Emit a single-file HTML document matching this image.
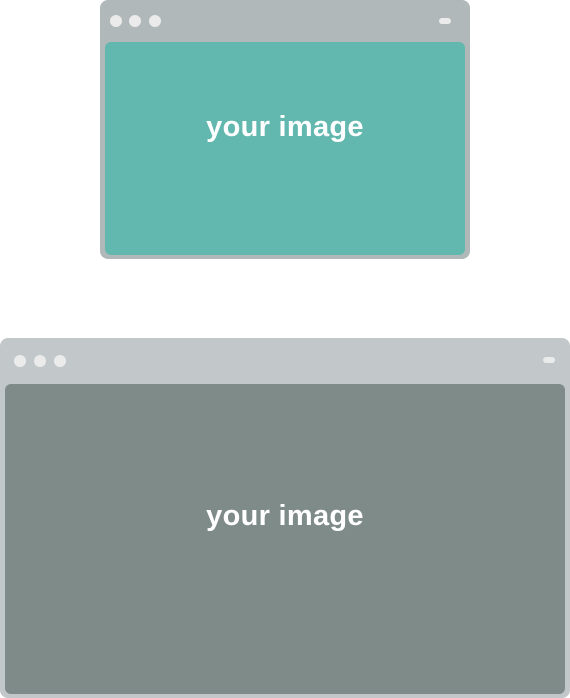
<!DOCTYPE html>
<html><head><meta charset="utf-8"><style>
html,body{margin:0;padding:0;width:570px;height:698px;background:#fff;overflow:hidden;font-family:"Liberation Sans",sans-serif}
.win{position:absolute;border-radius:8px}
.dot{position:absolute;width:12px;height:12px;border-radius:50%;background:#ebebeb}
.dash{position:absolute;width:12px;height:6px;border-radius:3px;background:#ebebeb}
.inner{position:absolute;border-radius:6px;color:#fff;font-size:29px;font-weight:bold;display:flex;align-items:center;justify-content:center;letter-spacing:0.3px}
</style></head><body>
<div class="win" style="left:100px;top:0;width:370px;height:259px;background:#b1b8b9">
  <div class="dot" style="left:10px;top:15px"></div>
  <div class="dot" style="left:29px;top:15px"></div>
  <div class="dot" style="left:49px;top:15px"></div>
  <div class="dash" style="left:339px;top:18px"></div>
  <div class="inner" style="left:5px;top:42px;width:360px;height:213px;background:#62b8ae"><span style="margin-top:-43px">your image</span></div>
</div>
<div class="win" style="left:0;top:338px;width:570px;height:360px;background:#c2c7c9">
  <div class="dot" style="left:14px;top:17px"></div>
  <div class="dot" style="left:34px;top:17px"></div>
  <div class="dot" style="left:54px;top:17px"></div>
  <div class="dash" style="left:543px;top:19px"></div>
  <div class="inner" style="left:5px;top:46px;width:560px;height:310px;background:#7e8b89"><span style="margin-top:-46px">your image</span></div>
</div>
</body></html>
